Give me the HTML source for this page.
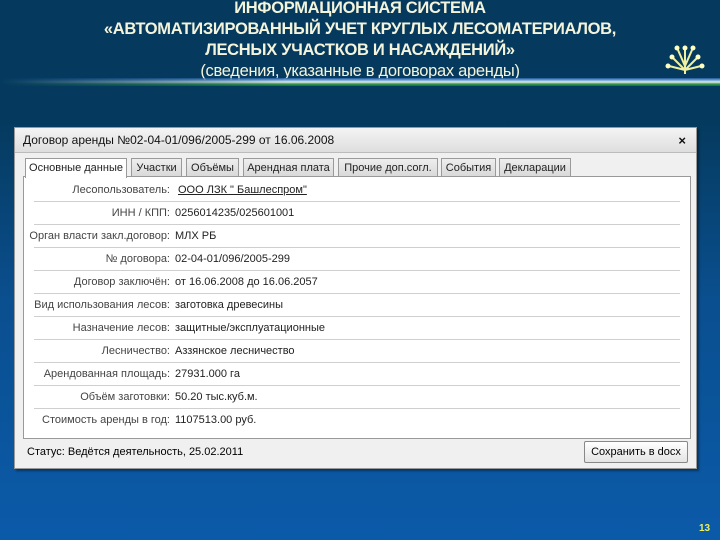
<!DOCTYPE html>
<html><head><meta charset="utf-8"><style>
*{margin:0;padding:0;box-sizing:border-box}
body{width:720px;height:540px;overflow:hidden;position:relative;font-family:"Liberation Sans","DejaVu Sans",sans-serif;background:linear-gradient(#053a5e 0,#053a5e 120px,#0a4f8f 300px,#0b5aa9 540px)}
.t{position:absolute;left:0;width:720px;text-align:center;color:#f4f4dc;font-weight:bold;font-size:16.5px;line-height:21px;letter-spacing:-0.3px}
.stripe{position:absolute;left:0;top:78px;width:720px;height:8px;background:linear-gradient(#1d5a9c 0,#8fb8e8 30%,#fff 50%,#3aa74c 75%,#17703a 100%);opacity:.9;-webkit-mask-image:linear-gradient(90deg,transparent 0,#000 40%,#000 100%)}
.win{position:absolute;left:14px;top:127px;width:683px;height:342px;background:#f0f0f0;border:1px solid #999;box-shadow:2px 2px 2px rgba(0,0,0,.4)}
.tb{height:25px;background:linear-gradient(#f4f4f4,#dedede);border-bottom:1px solid #bbb;font-size:12px;line-height:25px;padding-left:8px;color:#111}
.x{position:absolute;right:10px;top:0;font-weight:bold;font-size:13px}
.tab{position:absolute;top:30px;height:19px;border:1px solid #9a9a9a;border-bottom:none;background:linear-gradient(#eee,#d8d8d8);font-size:11px;text-align:center;line-height:18px;color:#222}
.tab.a{background:#fff;height:20px;z-index:2}
.panel{position:absolute;left:8px;top:48px;width:668px;height:263px;background:#fff;border:1px solid #999}
.row{position:absolute;left:10px;width:646px;height:23px;border-bottom:1px solid #cfcfcf;font-size:11px;line-height:23px;color:#222}
.l{position:absolute;right:510px;color:#444;white-space:nowrap}
.v{position:absolute;left:141px;white-space:nowrap}
.st{position:absolute;left:12px;top:318px;font-size:11px}
.btn{position:absolute;right:8px;top:313px;width:104px;height:22px;border:1px solid #888;background:linear-gradient(#fff,#e4e4e4);font-size:11px;text-align:center;line-height:20px;border-radius:2px}
</style></head><body>
<div class="t" style="top:-2px">ИНФОРМАЦИОННАЯ СИСТЕМА</div>
<div class="t" style="top:19px">«АВТОМАТИЗИРОВАННЫЙ УЧЕТ КРУГЛЫХ ЛЕСОМАТЕРИАЛОВ,</div>
<div class="t" style="top:40px">ЛЕСНЫХ УЧАСТКОВ И НАСАЖДЕНИЙ»</div>
<div class="t" style="top:61px;font-weight:normal">(сведения, указанные в договорах аренды)</div>
<div class="stripe"></div>
<svg style="position:absolute;left:665px;top:40px" width="40" height="36" viewBox="0 0 40 36" stroke="#f0f0a0" stroke-width="2" fill="none">
<path d="M20 34V10M20 30L8 18M20 30L32 18M20 30L4 26M20 30L36 26M20 26L13 10M20 26L27 10"/>
<g fill="#ffffc0" stroke="none"><circle cx="20" cy="8" r="2.5"/><circle cx="7" cy="17" r="2.5"/><circle cx="33" cy="17" r="2.5"/><circle cx="3" cy="26" r="2.5"/><circle cx="37" cy="26" r="2.5"/><circle cx="12" cy="8" r="2.5"/><circle cx="28" cy="8" r="2.5"/></g></svg>
<div class="win">
<div class="tb">Договор аренды №02-04-01/096/2005-299 от 16.06.2008<span class="x">×</span></div>
<div class="tab a" style="left:10px;width:102px">Основные данные</div>
<div class="tab" style="left:116px;width:51px">Участки</div>
<div class="tab" style="left:171px;width:53px">Объёмы</div>
<div class="tab" style="left:228px;width:91px">Арендная плата</div>
<div class="tab" style="left:323px;width:100px">Прочие доп.согл.</div>
<div class="tab" style="left:426px;width:55px">События</div>
<div class="tab" style="left:484px;width:72px">Декларации</div>
<div class="panel">
<div class="row" style="top:2px"><span class="l">Лесопользователь:</span><span class="v" style="left:144px;text-decoration:underline">ООО ЛЗК " Башлеспром"</span></div>
<div class="row" style="top:25px"><span class="l">ИНН / КПП:</span><span class="v">0256014235/025601001</span></div>
<div class="row" style="top:48px"><span class="l">Орган власти закл.договор:</span><span class="v">МЛХ РБ</span></div>
<div class="row" style="top:71px"><span class="l">№ договора:</span><span class="v">02-04-01/096/2005-299</span></div>
<div class="row" style="top:94px"><span class="l">Договор заключён:</span><span class="v">от 16.06.2008 до 16.06.2057</span></div>
<div class="row" style="top:117px"><span class="l">Вид использования лесов:</span><span class="v">заготовка древесины</span></div>
<div class="row" style="top:140px"><span class="l">Назначение лесов:</span><span class="v">защитные/эксплуатационные</span></div>
<div class="row" style="top:163px"><span class="l">Лесничество:</span><span class="v">Аззянское лесничество</span></div>
<div class="row" style="top:186px"><span class="l">Арендованная площадь:</span><span class="v">27931.000 га</span></div>
<div class="row" style="top:209px"><span class="l">Объём заготовки:</span><span class="v">50.20 тыс.куб.м.</span></div>
<div class="row" style="top:232px;border:none"><span class="l">Стоимость аренды в год:</span><span class="v">1107513.00 руб.</span></div>
</div>
<div class="st">Статус: Ведётся деятельность, 25.02.2011</div>
<div class="btn">Сохранить в docx</div>
</div>
<div style="position:absolute;left:699px;top:523px;color:#e8f060;font-weight:bold;font-size:10px">13</div>
</body></html>
